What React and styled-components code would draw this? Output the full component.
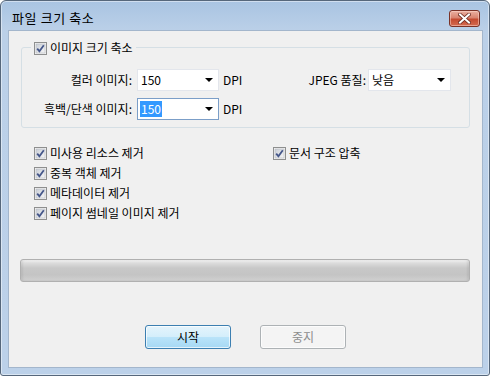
import styled, { createGlobalStyle } from "styled-components";

const GlobalStyle = createGlobalStyle`
  html, body { margin: 0; padding: 0; background: #fff; }
  body {
    font-family: "Noto Sans CJK KR", "Liberation Sans", sans-serif;
    font-size: 12px;
    color: #000;
  }
  * { box-sizing: border-box; }
`;

const Window = styled.div`
  width: 490px;
  height: 376px;
  border: 1px solid #56677b;
  border-radius: 6px 6px 3px 3px;
  background: linear-gradient(#a9c4e2 0px, #bbd0e8 30px, #bcd1e9 100%);
  box-shadow: inset 0 0 0 1px rgba(255, 255, 255, 0.45);
  display: flex;
  flex-direction: column;
  padding: 0 6px 7px 7px;
`;

const TitleBar = styled.div`
  height: 29px;
  padding: 5px 3px 0 4px;
  display: flex;
  align-items: center;
  justify-content: space-between;
`;

const Title = styled.span`
  font-size: 13px;
  letter-spacing: 0.6px;
  line-height: 16px;
  color: #000;
`;

const CloseButton = styled.span`
  width: 31px;
  height: 17px;
  border: 1px solid #7a3227;
  border-radius: 3px;
  background: linear-gradient(#eab0a1 0%, #d98470 45%, #c44b31 55%, #d46b50 100%);
  box-shadow: inset 0 0 0 1px rgba(255, 220, 210, 0.5);
  display: flex;
  align-items: center;
  justify-content: center;
`;

const Client = styled.div`
  flex: 1;
  background: #f0f0f0;
  border: 1px solid #a3b6cc;
  display: flex;
  flex-direction: column;
`;

const Group = styled.div`
  position: relative;
  margin: 16px 12px 0 12px;
  border: 1px solid #d5dfe5;
  border-radius: 3px;
  padding: 21px 18px 7px 0;
  display: flex;
  flex-direction: column;
  gap: 7px;
`;

const Legend = styled.div`
  position: absolute;
  top: -8px;
  left: 9px;
  height: 16px;
  padding: 0 3px;
  background: #f0f0f0;
  display: flex;
  align-items: center;
  gap: 3px;
  line-height: 16px;
`;

const Row = styled.div`
  height: 22px;
  display: flex;
  align-items: center;
`;

const Label = styled.span`
  width: 115px;
  padding-right: 5px;
  text-align: right;
  line-height: 16px;
  white-space: nowrap;
`;

const Unit = styled.span`
  margin-left: 4px;
  line-height: 16px;
`;

const Spacer = styled.span`
  flex: 1;
`;

const SideLabel = styled.span`
  margin-right: 2px;
  line-height: 16px;
  white-space: nowrap;
`;

const Combo = styled.div`
  width: ${(p) => p.$width || 82}px;
  height: 22px;
  background: #fff;
  border: 1px solid ${(p) => (p.$focused ? "#7b9ec8" : "#e3e6ec")};
  display: flex;
  align-items: center;
  padding-left: 2px;
  line-height: 16px;
`;

const Selected = styled.span`
  background: #3399ff;
  color: #fff;
  padding: 0 1px;
`;

const Value = styled.span`
  padding-left: 1px;
`;

const Arrow = styled.span`
  margin-left: auto;
  margin-right: 5px;
  width: 0;
  height: 0;
  border-left: 4px solid transparent;
  border-right: 4px solid transparent;
  border-top: 4px solid #000;
`;

const CheckGrid = styled.div`
  margin-top: 15px;
  padding-left: 25px;
  display: grid;
  grid-template-columns: 239px 1fr;
  grid-template-rows: repeat(4, 20px);
  grid-auto-flow: column;
`;

const CheckItem = styled.label`
  display: flex;
  align-items: center;
  gap: 3px;
  line-height: 16px;
  white-space: nowrap;
`;

const Progress = styled.div`
  margin: 36px 12px 0 11px;
  height: 23px;
  border: 1px solid #b0b0b0;
  border-radius: 3px;
  background: linear-gradient(#f2f2f2 0px, #dcdcdc 3px, #c8c8c8 8px, #c4c4c4 70%, #d0d0d0 100%);
  box-shadow: inset 2px 0 2px rgba(0, 0, 0, 0.06), inset -2px 0 2px rgba(0, 0, 0, 0.06);
`;

const ButtonRow = styled.div`
  margin-top: 43px;
  display: flex;
  justify-content: center;
  gap: 29px;
`;

const Button = styled.button`
  width: 86px;
  height: 24px;
  border-radius: 3px;
  font-family: inherit;
  font-size: 12px;
  line-height: 16px;
  padding: 0;
  border: 1px solid ${(p) => (p.$primary ? "#3c7fb1" : "#adb2b5")};
  color: ${(p) => (p.disabled ? "#8d8d8d" : "#000")};
  background: ${(p) =>
    p.$primary
      ? "linear-gradient(#e5f4fc 0%, #d4eefb 48%, #b9e3f9 52%, #a6d8f4 100%)"
      : "#f4f4f4"};
  box-shadow: inset 0 0 0 1px ${(p) => (p.$primary ? "rgba(255,255,255,0.7)" : "#fcfcfc")};
`;

function CheckBox() {
  return (
    <svg width="13" height="13" viewBox="0 0 13 13">
      <defs>
        <linearGradient id="cbg" x1="0" y1="0" x2="1" y2="1">
          <stop offset="0" stopColor="#c9ced6" />
          <stop offset="1" stopColor="#f7f7f7" />
        </linearGradient>
      </defs>
      <rect x="0.5" y="0.5" width="12" height="12" fill="#f4f4f4" stroke="#8e8f8f" />
      <rect x="2" y="2" width="9" height="9" fill="url(#cbg)" stroke="#b5b9bf" strokeWidth="0.6" />
      <path d="M3.2 6.6 L5.4 9.2 L9.8 3.2" fill="none" stroke="#45578a" strokeWidth="1.8" />
    </svg>
  );
}

function CloseIcon() {
  return (
    <svg width="13" height="11" viewBox="0 0 13 11">
      <path d="M2 1.5 L11 9.5 M11 1.5 L2 9.5" stroke="#6a2a20" strokeWidth="3.6" strokeLinecap="square" />
      <path d="M2 1.5 L11 9.5 M11 1.5 L2 9.5" stroke="#fff" strokeWidth="2" strokeLinecap="square" />
    </svg>
  );
}

const options = [
  "미사용 리소스 제거",
  "중복 객체 제거",
  "메타데이터 제거",
  "페이지 썸네일 이미지 제거",
  "문서 구조 압축",
];

export default function App() {
  return (
    <>
      <GlobalStyle />
      <Window>
        <TitleBar>
          <Title>파일 크기 축소</Title>
          <CloseButton>
            <CloseIcon />
          </CloseButton>
        </TitleBar>
        <Client>
          <Group>
            <Legend>
              <CheckBox />
              이미지 크기 축소
            </Legend>
            <Row>
              <Label>컬러 이미지:</Label>
              <Combo>
                <Value>150</Value>
                <Arrow />
              </Combo>
              <Unit>DPI</Unit>
              <Spacer />
              <SideLabel>JPEG 품질:</SideLabel>
              <Combo $width={83}>
                <Value>낮음</Value>
                <Arrow />
              </Combo>
            </Row>
            <Row>
              <Label>흑백/단색 이미지:</Label>
              <Combo $focused>
                <Selected>150</Selected>
                <Arrow />
              </Combo>
              <Unit>DPI</Unit>
            </Row>
          </Group>
          <CheckGrid>
            {options.map((o) => (
              <CheckItem key={o}>
                <CheckBox />
                {o}
              </CheckItem>
            ))}
          </CheckGrid>
          <Progress />
          <ButtonRow>
            <Button $primary>시작</Button>
            <Button disabled>중지</Button>
          </ButtonRow>
        </Client>
      </Window>
    </>
  );
}
